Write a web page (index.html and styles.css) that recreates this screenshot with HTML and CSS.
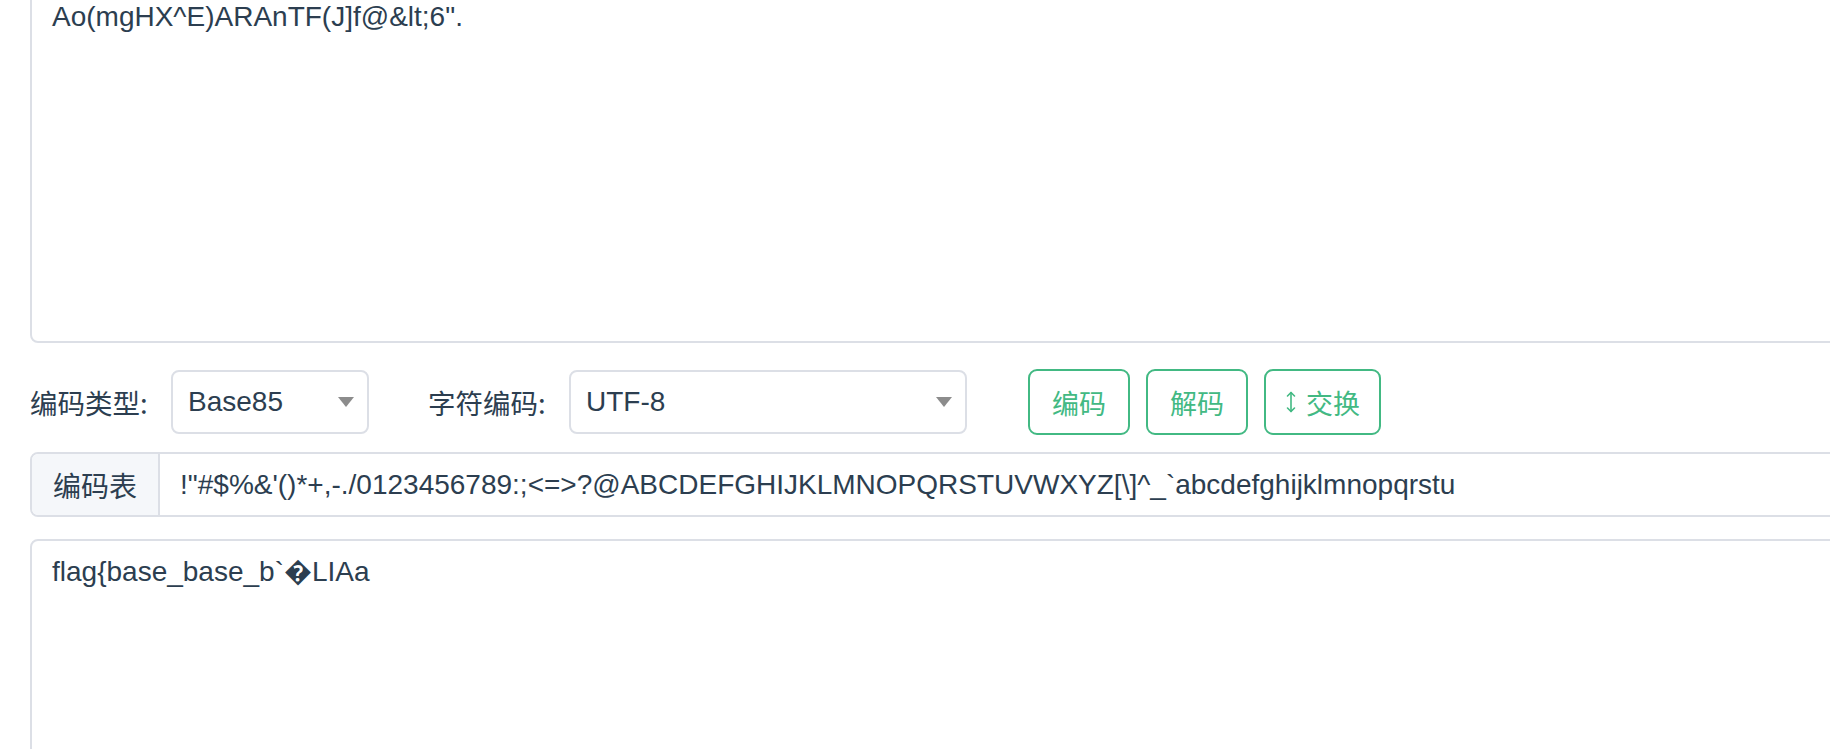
FILE: index.html
```html
<!DOCTYPE html>
<html lang="zh-CN">
<head>
<meta charset="utf-8">
<title>Base85</title>
<link rel="stylesheet" href="styles.css">
</head>
<body>
<div class="page">
  <div class="box box-top">
    <div class="box-text">Ao(mgHX^E)ARAnTF(J]f@&amp;lt;6".</div>
  </div>

  <div class="toolbar">
    <div class="field-label">编码类型:</div>
    <div class="select select-sm">
      <span class="select-value">Base85</span>
      <span class="caret"></span>
    </div>
    <div class="field-label field-label-2">字符编码:</div>
    <div class="select select-lg">
      <span class="select-value">UTF-8</span>
      <span class="caret"></span>
    </div>
    <div class="btns">
      <button class="btn">编码</button>
      <button class="btn">解码</button>
      <button class="btn btn-swap"><svg class="swap-icon" width="10" height="22" viewBox="0 0 10 22" fill="none" stroke="currentColor" stroke-width="1.6" stroke-linecap="round" stroke-linejoin="round"><path d="M5 1.5V20.5"/><path d="M1.5 5L5 1.5L8.5 5"/><path d="M1.5 17L5 20.5L8.5 17"/></svg><span>交换</span></button>
    </div>
  </div>

  <div class="group">
    <div class="prepend">编码表</div>
    <div class="group-input">!"#$%&amp;'()*+,-./0123456789:;&lt;=&gt;?@ABCDEFGHIJKLMNOPQRSTUVWXYZ[\]^_`abcdefghijklmnopqrstu</div>
  </div>

  <div class="box box-bottom">
    <div class="box-text">flag{base_base_b`&#xFFFD;LIAa</div>
  </div>
</div>
</body>
</html>
```
FILE: styles.css
```css
html, body {
  margin: 0;
  padding: 0;
  background: #ffffff;
  overflow: hidden;
}

body {
  height: 100vh;
  font-family: "Liberation Sans", Arial, "Noto Sans CJK SC", sans-serif;
  font-size: 28px;
  color: #2c3e50;
}

.page {
  width: 1900px;
  padding-left: 30px;
  box-sizing: border-box;
}

.box {
  border: 2px solid #dcdfe6;
  border-radius: 8px;
  box-sizing: border-box;
  padding: 10px 20px;
  background: #fff;
}

.box-text {
  line-height: 42px;
  white-space: pre;
}

.box-top {
  margin-top: -16px;
  height: 359px;
}

.box-bottom {
  margin-top: 22px;
  height: 230px;
}

.toolbar {
  display: flex;
  align-items: center;
  margin-top: 27px;
  height: 64px;
}

.field-label {
  width: 121px;
  white-space: nowrap;
  font-family: "Noto Sans CJK SC", "Liberation Sans", sans-serif;
  font-size: 27.5px;
  line-height: 64px;
}

.field-label-2 {
  margin-left: 59px;
}

.select {
  margin-left: 20px;
  height: 64px;
  box-sizing: border-box;
  border: 2px solid #dcdfe6;
  border-radius: 8px;
  display: flex;
  align-items: center;
  justify-content: space-between;
  padding: 0 13px 0 15px;
}

.select-sm { width: 198px; }
.select-lg { width: 398px; }

.caret {
  width: 0;
  height: 0;
  border-left: 8px solid transparent;
  border-right: 8px solid transparent;
  border-top: 10px solid #8c8c8c;
}

.btns {
  display: flex;
  gap: 16px;
  margin-left: 61px;
}

.btn {
  height: 66px;
  box-sizing: border-box;
  border: 2px solid #42b983;
  border-radius: 9px;
  background: #fff;
  color: #42b983;
  font-family: "Noto Sans CJK SC", "Liberation Sans", sans-serif;
  font-size: 27px;
  padding: 0 22px;
  display: flex;
  align-items: center;
  gap: 10px;
  cursor: pointer;
}

.btn-swap {
  padding: 0 19px 0 20px;
}

.swap-icon {
  display: block;
}

.group {
  display: flex;
  margin-top: 18px;
  height: 65px;
  box-sizing: border-box;
  border: 2px solid #dcdfe6;
  border-radius: 8px;
  overflow: hidden;
}

.prepend {
  background: #f5f7fa;
  border-right: 2px solid #dcdfe6;
  padding: 0 21px;
  display: flex;
  align-items: center;
  font-family: "Noto Sans CJK SC", "Liberation Sans", sans-serif;
  font-size: 28px;
}

.group-input {
  flex: 1;
  padding: 0 20px;
  display: flex;
  align-items: center;
  white-space: pre;
}
```
